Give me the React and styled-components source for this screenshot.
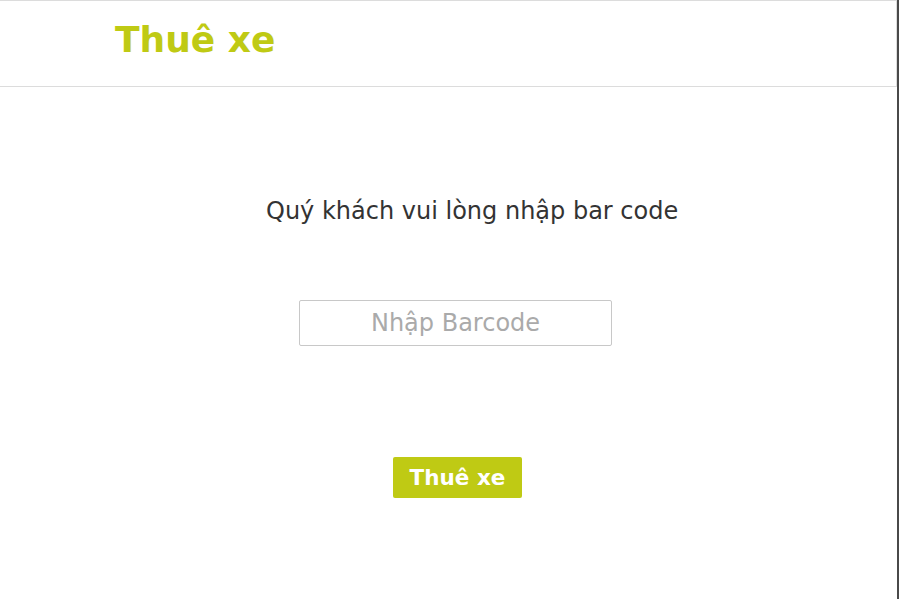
import styled, { createGlobalStyle } from "styled-components";

const GlobalStyle = createGlobalStyle`
  html, body {
    margin: 0;
    padding: 0;
    background: #fff;
  }
  body {
    font-family: "DejaVu Sans", Verdana, sans-serif;
  }
`;

const green = "#bfca14";

export default function App() {
  return (
    <Page>
      <GlobalStyle />
      <Header>
        <Title>Thuê xe</Title>
      </Header>
      <Main>
        <Prompt>Quý khách vui lòng nhập bar code</Prompt>
        <BarcodeInput type="text" placeholder="Nhập Barcode" />
        <RentButton type="button">Thuê xe</RentButton>
      </Main>
    </Page>
  );
}

const Page = styled.div`
  width: 899px;
  min-height: 100vh;
  box-sizing: border-box;
  border-right: 2px solid #4a4a4a;
`;

const Header = styled.header`
  height: 87px;
  box-sizing: border-box;
  border: 1px solid #dcdcdc;
  border-left: none;
  padding: 21px 0 0 115px;
`;

const Title = styled.h1`
  margin: 0;
  font-size: 36px;
  line-height: 1;
  font-weight: bold;
  color: ${green};
`;

const Main = styled.main`
  display: flex;
  flex-direction: column;
  align-items: flex-start;
  padding-top: 112px;
`;

const Prompt = styled.p`
  margin: 0 0 0 266px;
  font-size: 24px;
  line-height: 1;
  color: #333;
`;

const BarcodeInput = styled.input`
  margin: 77px 0 0 299px;
  width: 313px;
  height: 46px;
  box-sizing: border-box;
  border: 1px solid #c8c8c8;
  border-radius: 2px;
  font-family: "DejaVu Sans", Verdana, sans-serif;
  font-size: 24px;
  text-align: center;
  color: #333;
  outline: none;
  &::placeholder {
    color: #aaa;
  }
`;

const RentButton = styled.button`
  margin: 111px 0 0 393px;
  width: 129px;
  height: 41px;
  border: none;
  border-radius: 2px;
  background: ${green};
  color: #fff;
  font-family: "DejaVu Sans", Verdana, sans-serif;
  font-size: 21.5px;
  font-weight: bold;
  padding: 0;
`;
